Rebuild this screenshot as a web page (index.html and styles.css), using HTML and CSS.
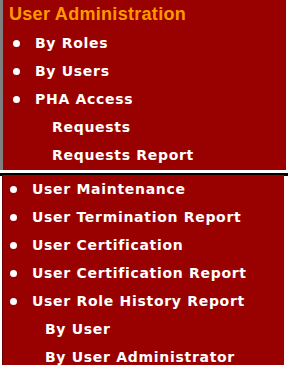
FILE: index.html
```html
<!DOCTYPE html>
<html>
<head>
<meta charset="utf-8">
<link rel="stylesheet" href="styles.css">
</head>
<body>
<div class="panel top">
  <div class="title">User Administration</div>
  <ul class="menu">
    <li class="item"><span class="dot"></span>By Roles</li>
    <li class="item"><span class="dot"></span>By Users</li>
    <li class="item"><span class="dot"></span>PHA Access</li>
    <li class="sub">Requests</li>
    <li class="sub">Requests Report</li>
  </ul>
</div>
<div class="rule"></div>
<div class="panel bottom">
  <ul class="menu">
    <li class="item"><span class="dot"></span>User Maintenance</li>
    <li class="item"><span class="dot"></span>User Termination Report</li>
    <li class="item"><span class="dot"></span>User Certification</li>
    <li class="item"><span class="dot"></span>User Certification Report</li>
    <li class="item"><span class="dot"></span>User Role History Report</li>
    <li class="sub">By User</li>
    <li class="sub">By User Administrator</li>
  </ul>
</div>
</body>
</html>
```
FILE: styles.css
```css
html, body {
  margin: 0;
  padding: 0;
  background: #ffffff;
}
body {
  width: 288px;
  height: 369px;
  overflow: hidden;
  font-family: "DejaVu Sans", Verdana, sans-serif;
  font-weight: bold;
  font-size: 14px;
  letter-spacing: 0.7px;
  color: #ffffff;
}
.panel {
  background: #990000;
}
.top {
  width: 283px;
  height: 170px;
  border-left: 3px solid #808080;
}
.title {
  height: 29px;
  line-height: 29px;
  padding-left: 6px;
  font-family: "Liberation Sans", Arial, sans-serif;
  font-size: 18px;
  letter-spacing: 0.3px;
  color: #ff9900;
}
.menu {
  list-style: none;
  margin: 0;
  padding: 0;
}
.item, .sub {
  height: 28px;
  line-height: 28px;
  display: flex;
  align-items: center;
  white-space: nowrap;
}
.top .item { padding-left: 10px; }
.top .sub { padding-left: 49px; }
.dot {
  width: 7px;
  height: 7px;
  border-radius: 50%;
  background: #ffffff;
  margin-right: 15px;
  flex: none;
}
.rule {
  height: 3px;
  background: #000000;
  margin: 3px 0 1px 0;
}
.bottom {
  width: 281px;
  margin-left: 2px;
  height: 190px;
  border-left: 1px solid #660000;
}
.bottom .menu { margin-top: -2px; }
.bottom .item { padding-left: 7px; }
.bottom .sub { padding-left: 42px; }
```
